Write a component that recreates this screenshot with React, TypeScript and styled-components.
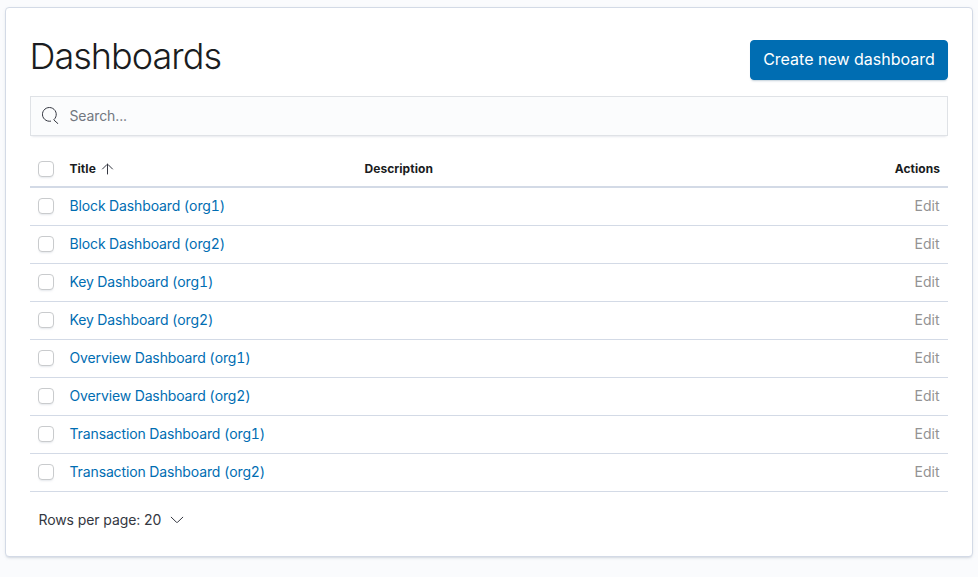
import React from 'react';
import styled, { createGlobalStyle } from 'styled-components';

const Global = createGlobalStyle`
  *, *::before, *::after { box-sizing: border-box; }
  html { background: #fafbfd; }
  body { margin: 0; font-family: Inter, "Liberation Sans", sans-serif; font-size: 14px; line-height: 21px; letter-spacing: -0.1px; color: #343741; font-kerning: normal; }
`;

const Page = styled.main`
  padding: 7px 5px 19px;
  height: 577px;
`;

const Panel = styled.section`
  height: 550px;
  padding: 32px 24px 0;
  background: #fff;
  border: 1px solid #d3dae6;
  border-radius: 4px;
  box-shadow: 0 2px 2px -1px rgba(152, 162, 179, 0.3), 0 1px 5px -2px rgba(152, 162, 179, 0.3);
`;

const Header = styled.header`
  display: flex;
  justify-content: space-between;
  height: 40px;
`;

const Heading = styled.h1`
  margin: -4px 0 0 -0.5px;
  font-size: 36px;
  font-weight: 300;
  line-height: 40px;
  letter-spacing: -0.96px;
  color: #1a1c21;
`;

const CreateButton = styled.button`
  width: 198px;
  height: 40px;
  padding: 0 0 2px;
  border: 1px solid #006db2;
  border-radius: 4px;
  background: #006db2;
  color: #fff;
  font: 400 16px/36px Inter, "Liberation Sans", sans-serif;
  letter-spacing: 0;
  box-shadow: 0 2px 2px -1px rgba(54, 97, 126, 0.3);
`;

const Search = styled.label`
  display: flex;
  align-items: center;
  gap: 11px;
  height: 40px;
  margin-top: 16px;
  padding: 0 10px 2px 10.5px;
  border: 1px solid #dfe2e6;
  background: #fbfcfd;
  box-shadow: 0 1px 1px -1px rgba(152, 162, 179, 0.2), 0 3px 2px -2px rgba(152, 162, 179, 0.2);
`;

const SearchInput = styled.input`
  flex: 1;
  border: 0;
  padding: 0;
  outline: 0;
  background: transparent;
  font: inherit;
  letter-spacing: -0.12px;
  &::placeholder { color: #727780; opacity: 1; }
`;

const Row = styled.div<{ $head?: boolean }>`
  display: grid;
  grid-template-columns: 31.5px 295px 1fr auto;
  align-items: center;
  height: ${p => (p.$head ? 36 : 38)}px;
  padding: 0 8px ${p => (p.$head ? 0 : 2)}px;
  border-bottom: ${p => (p.$head ? 2 : 1)}px solid #d3dae6;
`;

const Table = styled.div`
  margin-top: 16px;
`;

const Checkbox = styled.input`
  appearance: none;
  width: 16px;
  height: 16px;
  margin: 0;
  border: 1px solid #c9cbcd;
  border-radius: 4px;
  background: #fff;
  box-shadow: 0 2px 2px -1px rgba(152, 162, 179, 0.25);
`;

const HeadCell = styled.div`
  display: flex;
  align-items: center;
  gap: 5px;
  font-size: 12px;
  font-weight: 700;
  line-height: 18px;
  letter-spacing: 0.05px;
  color: #1a1c21;
`;

const SortArrow = styled.svg`
  margin: -1px 0 0;
`;

const TitleLink = styled.a`
  color: #006db2;
  font-variant-numeric: tabular-nums;
  letter-spacing: -0.13px;
`;

const Edit = styled.span`
  margin-right: 0.5px;
  color: #939393;
  letter-spacing: 0;
`;

const Pager = styled.div`
  display: flex;
  align-items: center;
  gap: 9px;
  margin: 17px 0 0 8.5px;
`;

const titles = ['Block', 'Key', 'Overview', 'Transaction'].flatMap(n => [`${n} Dashboard (org1)`, `${n} Dashboard (org2)`]);

export default function App() {
  return (
    <Page>
      <Global />
      <Panel>
        <Header>
          <Heading>Dashboards</Heading>
          <CreateButton>Create new dashboard</CreateButton>
        </Header>
        <Search>
          <svg width="17" height="17" viewBox="0 0 17 17" fill="none" stroke="#343741">
            <path d="M8.6 14.2A6.9 6.9 0 1 1 11.9 12.6V13l4 3.6" strokeLinecap="round" />
          </svg>
          <SearchInput placeholder="Search..." />
        </Search>
        <Table>
          <Row $head>
            <Checkbox type="checkbox" />
            <HeadCell>
              Title
              <SortArrow width="13" height="12" viewBox="0 0 13 12" fill="none" stroke="#343741">
                <path d="M6.5 11V1.2M1.5 6l4.6-4.6q.4-.4.8 0L11.5 6" strokeLinecap="round" />
              </SortArrow>
            </HeadCell>
            <HeadCell>Description</HeadCell>
            <HeadCell>Actions</HeadCell>
          </Row>
          {titles.map(t => (
            <Row key={t}>
              <Checkbox type="checkbox" />
              <TitleLink>{t}</TitleLink>
              <span />
              <Edit>Edit</Edit>
            </Row>
          ))}
        </Table>
        <Pager>
          Rows per page: 20
          <svg width="14" height="8" viewBox="0 0 14 8" fill="none" stroke="#343741">
            <path d="M1.2 1.2l5.2 5q.6.6 1.2 0l5.2-5" strokeLinecap="round" />
          </svg>
        </Pager>
      </Panel>
    </Page>
  );
}
